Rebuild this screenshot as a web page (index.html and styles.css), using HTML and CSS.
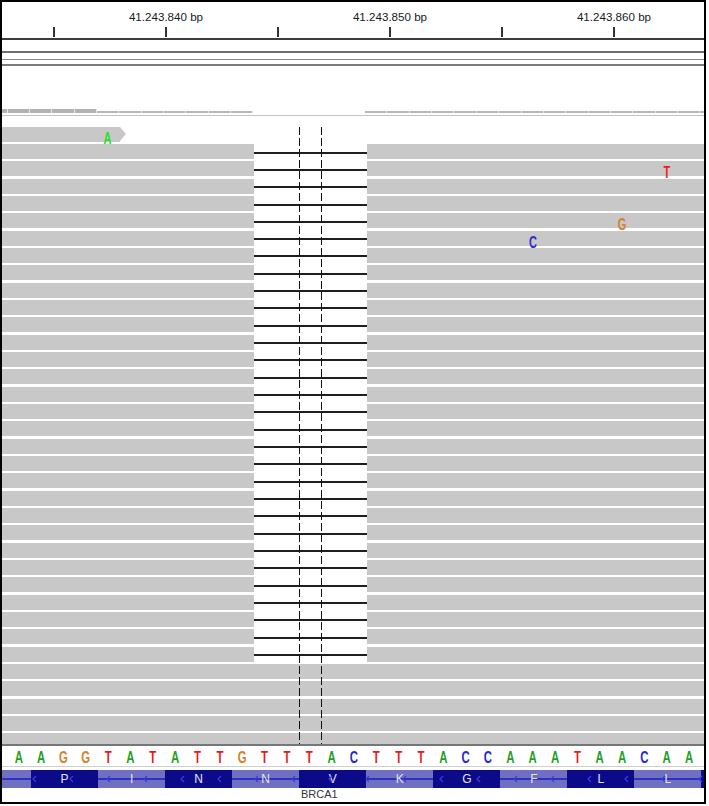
FILE: index.html
```html
<!DOCTYPE html>
<html>
<head>
<meta charset="utf-8">
<link rel="stylesheet" href="styles.css">
</head>
<body>
<div class="frame">
  <div class="ruler">
    <div class="labels"><span>41.243.840 bp</span><span>41.243.850 bp</span><span>41.243.860 bp</span></div>
    <div class="ticks"><i></i><i></i><i></i><i></i><i></i><i></i></div>
  </div>
  <div class="rule-line"></div>
  <div class="tracklines"><div class="l1"></div><div class="l2"></div><div class="l3"></div></div>
  <div class="coverage">
    <span class="cv hi part"></span>
    <span class="cv hi"></span><span class="cv hi"></span><span class="cv hi"></span><span class="cv hi"></span>
    <span class="cv lo"></span><span class="cv lo"></span><span class="cv lo"></span><span class="cv lo"></span><span class="cv lo"></span><span class="cv lo"></span><span class="cv lo"></span>
    <span class="cv none"></span><span class="cv none"></span><span class="cv none"></span><span class="cv none"></span><span class="cv none"></span>
    <span class="cv lo"></span><span class="cv lo"></span><span class="cv lo"></span><span class="cv lo"></span><span class="cv lo"></span><span class="cv lo"></span><span class="cv lo"></span><span class="cv lo"></span><span class="cv lo"></span><span class="cv lo"></span><span class="cv lo"></span><span class="cv lo"></span><span class="cv lo"></span><span class="cv lo"></span><span class="cv lo"></span><span class="cv lo"></span>
  </div>
  <div class="reads">
    <div class="row"><div class="read first"><b class="base ma">A</b></div></div>
    <div class="row del"><div class="read"></div><div class="gapline"></div><div class="read"></div></div>
    <div class="row del"><div class="read"></div><div class="gapline"></div><div class="read"><b class="base mt off-t">T</b></div></div>
    <div class="row del"><div class="read"></div><div class="gapline"></div><div class="read"></div></div>
    <div class="row del"><div class="read"></div><div class="gapline"></div><div class="read"></div></div>
    <div class="row del"><div class="read"></div><div class="gapline"></div><div class="read"><b class="base mg off-g">G</b></div></div>
    <div class="row del"><div class="read"></div><div class="gapline"></div><div class="read"><b class="base mc off-c">C</b></div></div>
    <div class="row del"><div class="read"></div><div class="gapline"></div><div class="read"></div></div>
    <div class="row del"><div class="read"></div><div class="gapline"></div><div class="read"></div></div>
    <div class="row del"><div class="read"></div><div class="gapline"></div><div class="read"></div></div>
    <div class="row del"><div class="read"></div><div class="gapline"></div><div class="read"></div></div>
    <div class="row del"><div class="read"></div><div class="gapline"></div><div class="read"></div></div>
    <div class="row del"><div class="read"></div><div class="gapline"></div><div class="read"></div></div>
    <div class="row del"><div class="read"></div><div class="gapline"></div><div class="read"></div></div>
    <div class="row del"><div class="read"></div><div class="gapline"></div><div class="read"></div></div>
    <div class="row del"><div class="read"></div><div class="gapline"></div><div class="read"></div></div>
    <div class="row del"><div class="read"></div><div class="gapline"></div><div class="read"></div></div>
    <div class="row del"><div class="read"></div><div class="gapline"></div><div class="read"></div></div>
    <div class="row del"><div class="read"></div><div class="gapline"></div><div class="read"></div></div>
    <div class="row del"><div class="read"></div><div class="gapline"></div><div class="read"></div></div>
    <div class="row del"><div class="read"></div><div class="gapline"></div><div class="read"></div></div>
    <div class="row del"><div class="read"></div><div class="gapline"></div><div class="read"></div></div>
    <div class="row del"><div class="read"></div><div class="gapline"></div><div class="read"></div></div>
    <div class="row del"><div class="read"></div><div class="gapline"></div><div class="read"></div></div>
    <div class="row del"><div class="read"></div><div class="gapline"></div><div class="read"></div></div>
    <div class="row del"><div class="read"></div><div class="gapline"></div><div class="read"></div></div>
    <div class="row del"><div class="read"></div><div class="gapline"></div><div class="read"></div></div>
    <div class="row del"><div class="read"></div><div class="gapline"></div><div class="read"></div></div>
    <div class="row del"><div class="read"></div><div class="gapline"></div><div class="read"></div></div>
    <div class="row del"><div class="read"></div><div class="gapline"></div><div class="read"></div></div>
    <div class="row del"><div class="read"></div><div class="gapline"></div><div class="read"></div></div>
    <div class="row"><div class="read"></div></div>
    <div class="row"><div class="read"></div></div>
    <div class="row"><div class="read"></div></div>
    <div class="row"><div class="read"></div></div>
    <div class="row"><div class="read"></div></div>
    <div class="center-line left"></div>
    <div class="center-line right"></div>
  </div>
  <div class="seq-top"></div>
  <div class="seq">
    <b class="s a">A</b><b class="s a">A</b><b class="s g">G</b><b class="s g">G</b><b class="s t">T</b><b class="s a">A</b><b class="s t">T</b><b class="s a">A</b><b class="s t">T</b><b class="s t">T</b><b class="s g">G</b><b class="s t">T</b><b class="s t">T</b><b class="s t">T</b><b class="s a">A</b><b class="s c">C</b><b class="s t">T</b><b class="s t">T</b><b class="s t">T</b><b class="s a">A</b><b class="s c">C</b><b class="s c">C</b><b class="s a">A</b><b class="s a">A</b><b class="s a">A</b><b class="s t">T</b><b class="s a">A</b><b class="s a">A</b><b class="s c">C</b><b class="s a">A</b><b class="s a">A</b>
  </div>
  <div class="gene">
    <span class="cd lead"></span>
    <span class="cd dk">P</span><span class="cd">I</span><span class="cd dk">N</span><span class="cd">N</span><span class="cd dk">V</span><span class="cd">K</span><span class="cd dk">G</span><span class="cd">F</span><span class="cd dk">L</span><span class="cd">L</span><span class="cd dk"></span>
    <svg class="chevrons" width="702" height="18" viewBox="0 0 702 18">
      <g fill="none" stroke="#3a3ae6" stroke-width="1.2">
        <polyline points="34,6 31,9 34,12"/><polyline points="71,6 68,9 71,12"/><polyline points="108,6 105,9 108,12"/><polyline points="145,6 142,9 145,12"/><polyline points="182,6 179,9 182,12"/><polyline points="219,6 216,9 219,12"/><polyline points="256,6 253,9 256,12"/><polyline points="293,6 290,9 293,12"/><polyline points="330,6 327,9 330,12"/><polyline points="367,6 364,9 367,12"/><polyline points="404,6 401,9 404,12"/><polyline points="441,6 438,9 441,12"/><polyline points="478,6 475,9 478,12"/><polyline points="515,6 512,9 515,12"/><polyline points="552,6 549,9 552,12"/><polyline points="589,6 586,9 589,12"/><polyline points="626,6 623,9 626,12"/><polyline points="663,6 660,9 663,12"/><polyline points="700,6 697,9 700,12"/>
      </g>
    </svg>
  </div>
  <div class="gene-label">BRCA1</div>
</div>
</body>
</html>
```

FILE: styles.css
```css
html, body {
  margin: 0;
  padding: 0;
  background: #fff;
}

.frame {
  width: 706px;
  height: 804px;
  box-sizing: border-box;
  border: 2px solid #000;
  display: flex;
  flex-direction: column;
  overflow: hidden;
  background: #fff;
}

/* Ruler */
.ruler {
  height: 36px;
  padding-top: 8px;
  box-sizing: border-box;
  overflow: hidden;
  flex: none;
}
.labels {
  display: flex;
  padding-left: 52px;
  font: 11.6px/13px "Liberation Sans", Arial, sans-serif;
  color: #1a1a1a;
}
.labels span {
  flex: none;
  width: 224px;
  text-align: center;
}
.ticks {
  display: flex;
  padding-left: 51px;
  margin-top: 4px;
  height: 10px;
}
.ticks i {
  flex: none;
  width: 112px;
  border-left: 2px solid #333;
  box-sizing: border-box;
}
.rule-line {
  flex: none;
  height: 2px;
  background: #3c3c3c;
}

/* empty tracks */
.tracklines {
  flex: none;
  height: 26px;
}
.l1 { margin-top: 11px; height: 2px; background: #6e6e6e; }
.l2 { margin-top: 6px; height: 1px; background: #8a8a8a; }
.l3 { margin-top: 4px; height: 2px; background: #7c7c7c; }

/* Coverage */
.coverage {
  flex: none;
  height: 50px;
  box-sizing: border-box;
  padding-bottom: 2px;
  border-bottom: 1px solid #c4c4c4;
  display: flex;
  align-items: flex-end;
  overflow: hidden;
}
.cv {
  flex: none;
  width: 22.35px;
  box-sizing: border-box;
  border-right: 1px solid #e8e8e8;
}
.cv.part { width: 5.6px; }
.cv.hi { height: 4.5px; background: #b2b2b2; }
.cv.lo { height: 2.5px; background: #b8b8b8; }
.cv.none { height: 0; border: 0; }

/* Reads */
.reads {
  position: relative;
  flex: none;
  height: 628px;
  box-sizing: border-box;
  padding-top: 10.7px;
  overflow: hidden;
  display: grid;
  grid-auto-rows: 15px;
  row-gap: 2.333px;
  align-content: start;
}
.row {
  display: grid;
  grid-template-columns: 1fr;
  height: 15px;
}
.row.del {
  grid-template-columns: 252px 113px 1fr;
}
.read {
  background: #c8c8c8;
  height: 15px;
  white-space: nowrap;
}
.read.first {
  position: relative;
  width: 118px;
  padding-left: 94.3px;
  box-sizing: border-box;
}
.read.first::after {
  content: "";
  position: absolute;
  left: 100%;
  top: 0;
  border-left: 6px solid #c8c8c8;
  border-top: 7.5px solid transparent;
  border-bottom: 7.5px solid transparent;
}
.gapline {
  background: linear-gradient(#1e1e1e, #1e1e1e) 0 7.5px / 100% 2px no-repeat;
}
.base {
  position: relative;
  z-index: 1;
  display: inline-block;
  width: 22.35px;
  text-align: center;
  font: bold 11px/15px "Liberation Sans", Arial, sans-serif;
  transform: translateY(1.6px) scaleY(1.45);
}
.ma { color: #26e026; }
.mt { color: #f01c1c; }
.mg { color: #d5822e; }
.mc { color: #2c2cd2; }
.off-t { margin-left: 288.8px; }
.off-g { margin-left: 243.8px; }
.off-c { margin-left: 154.8px; }

.center-line {
  position: absolute;
  top: 11px;
  bottom: 0;
  width: 1px;
  background: repeating-linear-gradient(to bottom, #111 0 8px, transparent 8px 11px);
}
.center-line.left { left: 297px; }
.center-line.right { left: 319px; }

/* Sequence */
.seq-top {
  flex: none;
  height: 2px;
  background: #777;
}
.seq {
  flex: none;
  display: flex;
  height: 20px;
  padding-left: 5.6px;
  border-bottom: 1px solid #cfcfcf;
  overflow: hidden;
}
.s {
  flex: none;
  width: 22.35px;
  text-align: center;
  font: bold 11.4px/20px "Liberation Sans", Arial, sans-serif;
  transform: translateY(1.6px) scaleY(1.42);
}
.s.a { color: #1fa01f; }
.s.t { color: #e41a1a; }
.s.g { color: #d5822e; }
.s.c { color: #2828d0; }

/* Gene */
.gene {
  position: relative;
  flex: none;
  margin-top: 3px;
  height: 18px;
  display: flex;
  overflow: hidden;
  background: linear-gradient(#2f2fc8, #2f2fc8) 0 8px / 100% 2px no-repeat, #7070c0;
}
.cd {
  flex: none;
  width: 67.05px;
  display: flex;
  align-items: center;
  justify-content: center;
  font: 12px/18px "Liberation Sans", Arial, sans-serif;
  color: #e4e4f0;
}
.cd.lead { width: 29px; }
.cd.dk { background: #0b0b8a; }
.chevrons {
  position: absolute;
  left: 0;
  top: 0;
}
.gene-label {
  flex: none;
  margin-top: 1px;
  padding-left: 299px;
  font: 11px/11px "Liberation Sans", Arial, sans-serif;
  color: #333;
}
```
